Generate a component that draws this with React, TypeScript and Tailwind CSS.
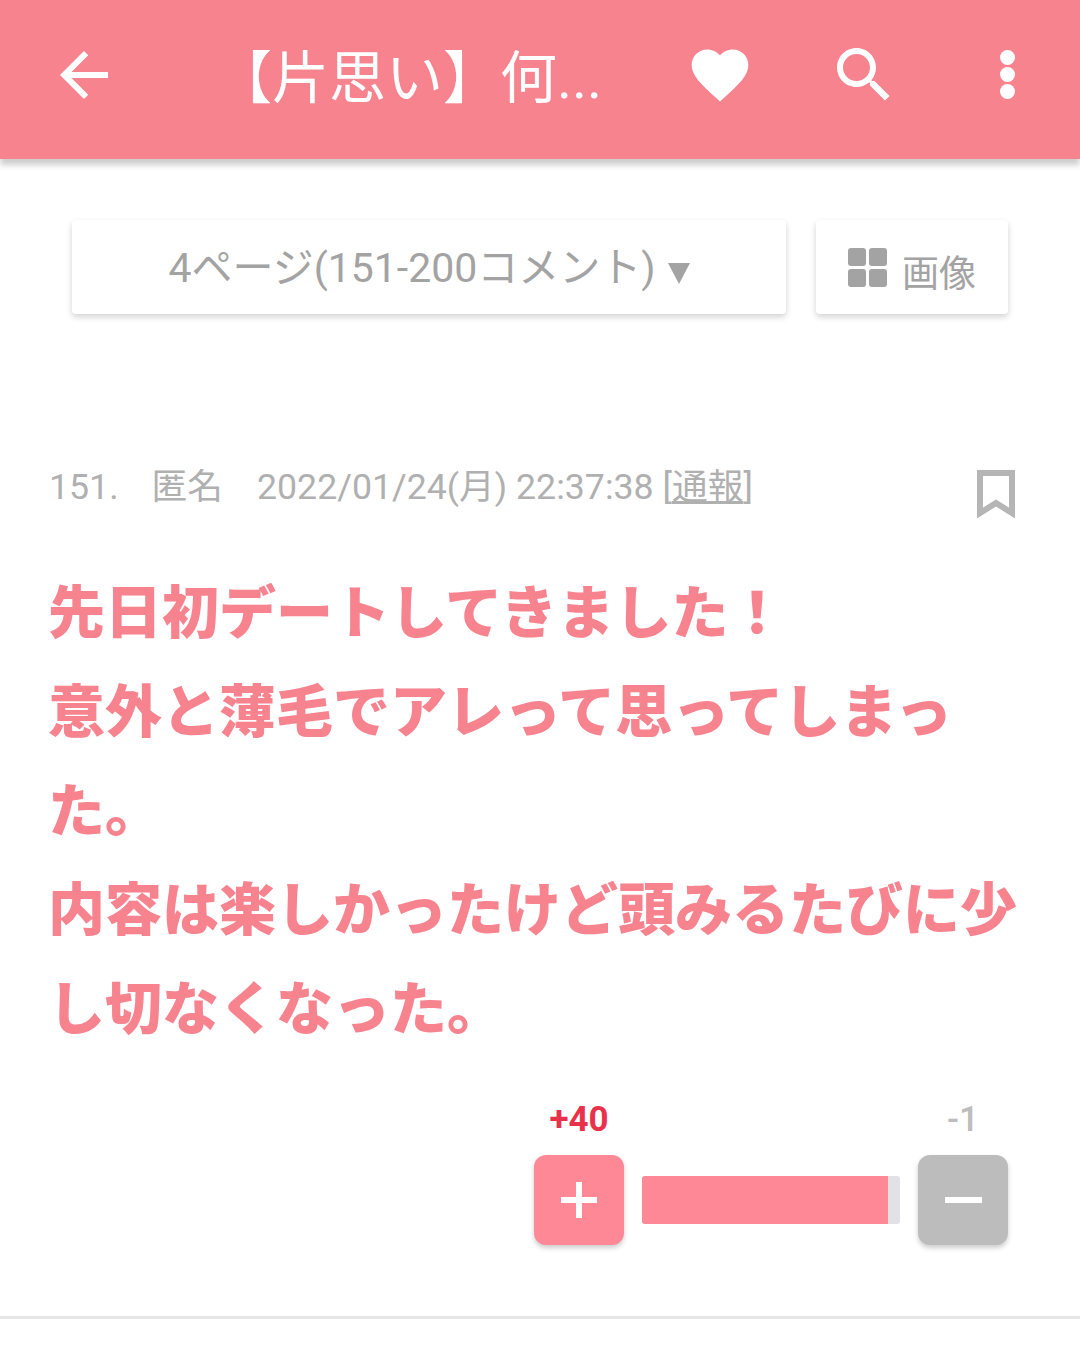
const font = "font-['Roboto','Noto_Sans_CJK_JP',sans-serif]"

function HeaderIcon({ d, className }: { d: string; className: string }) {
  return (
    <svg viewBox="0 0 24 24" className={className} fill="currentColor" aria-hidden="true">
      <path d={d} />
    </svg>
  )
}

function Header() {
  return (
    <header className="relative h-[159px] pb-[10px] bg-[#f7838f] text-white shadow-[0_6px_6px_rgba(0,0,0,0.2)] flex items-center">
      <HeaderIcon
        d="M20 11H7.83l5.59-5.59L12 4l-8 8 8 8 1.41-1.41L7.83 13H20v-2z"
        className="w-[72px] h-[72px] ml-[48px] shrink-0"
      />
      <div className="ml-[95px] mt-[7px] w-[396px] text-[57px] leading-none whitespace-nowrap">【片思い】何...</div>
      <HeaderIcon
        d="M12 21.35l-1.45-1.32C5.4 15.36 2 12.28 2 8.5 2 5.42 4.42 3 7.5 3c1.74 0 3.41.81 4.5 2.09C13.09 3.81 14.76 3 16.5 3 19.58 3 22 5.42 22 8.5c0 3.78-3.4 6.86-8.55 11.54L12 21.35z"
        className="w-[68px] h-[68px] ml-[75px] shrink-0"
      />
      <HeaderIcon
        d="M15.5 14h-.79l-.28-.27C15.41 12.59 16 11.11 16 9.5 16 5.91 13.09 3 9.5 3S3 5.91 3 9.5 5.91 16 9.5 16c1.61 0 3.09-.59 4.23-1.57l.27.28v.79l5 4.99L20.49 19l-4.99-5zm-6 0C7.01 14 5 11.99 5 9.5S7.01 5 9.5 5 14 7.01 14 9.5 11.99 14 9.5 14z"
        className="w-[72px] h-[72px] ml-[74px] shrink-0"
      />
      <div className="ml-[100px] flex flex-col gap-[2px]">
        <span className="w-[15px] h-[15px] rounded-full bg-white" />
        <span className="w-[15px] h-[15px] rounded-full bg-white" />
        <span className="w-[15px] h-[15px] rounded-full bg-white" />
      </div>
    </header>
  )
}

function Toolbar() {
  const card = 'h-[94px] bg-white rounded-[4px] shadow-[0_3px_6px_rgba(0,0,0,0.18)] flex items-center justify-center text-[#a3a3a3]'
  return (
    <div className="flex gap-[30px] pl-[72px] pt-[61px]">
      <div className={`${card} w-[714px] text-[41px] gap-[12px]`}>
        <span className="whitespace-nowrap mt-[4px]">4ページ(151-200コメント)</span>
        <span className="w-0 h-0 mt-[12px] border-x-[11px] border-x-transparent border-t-[21px] border-t-[#a3a3a3]" />
      </div>
      <div className={`${card} w-[192px] gap-[15px]`}>
        <div className="grid grid-cols-2 gap-[3px] w-[39px]">
          <span className="h-[18px] rounded-[3px] bg-[#a3a3a3]" />
          <span className="h-[18px] rounded-[3px] bg-[#a3a3a3]" />
          <span className="h-[18px] rounded-[3px] bg-[#a3a3a3]" />
          <span className="h-[18px] rounded-[3px] bg-[#a3a3a3]" />
        </div>
        <span className="text-[37px] leading-none mt-[14px] whitespace-nowrap">画像</span>
      </div>
    </div>
  )
}

function Comment() {
  return (
    <article className="pl-[48px] pt-[148px] border-b-[3px] border-[#e6e6e6] h-[1005px]">
      <div className="flex items-start justify-between pr-[65px]">
        <p className="pl-[1px] text-[35.7px] leading-[50px] text-[#b0b0b0] whitespace-pre">
          151.
          <span className="ml-[33px]">匿名</span>
          <span className="ml-[34px]">2022/01/24(月) 22:37:38 [</span>
          <span className="underline">通報</span>]
        </p>
        <svg viewBox="0 0 38 48" className="w-[38px] h-[48px] mt-[8px]" fill="none" aria-hidden="true">
          <path d="M3 3h32v40L19 33 3 43V3z" stroke="#b5b5b5" strokeWidth="6" />
        </svg>
      </div>
      <p className="mt-[46px] w-[985px] text-[57px] leading-[99px] font-black text-[#f7838f]">
        先日初デートしてきました！
        <br />
        意外と薄毛でアレって思ってしまった。
        <br />
        内容は楽しかったけど頭みるたびに少し切なくなった。
      </p>
      <div className="mt-[36px] ml-[486px] w-[474px]">
        <div className="flex justify-between h-[48px] items-center text-[35px] leading-none">
          <span className="w-[90px] text-center font-bold text-[#e8324c]">+40</span>
          <span className="w-[90px] text-center font-medium text-[#bdbdbd]">-1</span>
        </div>
        <div className="flex items-center gap-[18px] mt-[12px]">
          <button className="w-[90px] h-[90px] rounded-[12px] bg-[#ff8896] shadow-[0_3px_5px_rgba(0,0,0,0.2)] flex items-center justify-center shrink-0">
            <svg viewBox="0 0 36 36" className="w-[36px] h-[36px]" aria-hidden="true">
              <path d="M15 0h6v15h15v6H21v15h-6V21H0v-6h15z" fill="#fff" />
            </svg>
          </button>
          <div className="flex-1 h-[48px] rounded-[3px] bg-[#e2e2e6] overflow-hidden">
            <div className="h-full bg-[#ff8896]" style={{ width: `${(40 / 41) * 100 - 2.4}%` }} />
          </div>
          <button className="w-[90px] h-[90px] rounded-[12px] bg-[#bcbcbc] shadow-[0_3px_5px_rgba(0,0,0,0.2)] flex items-center justify-center shrink-0">
            <span className="w-[37px] h-[6px] bg-white" />
          </button>
        </div>
      </div>
    </article>
  )
}

export default function App() {
  return (
    <div className={`${font} w-[1080px] h-[1353px] bg-white overflow-hidden`}>
      <Header />
      <Toolbar />
      <Comment />
    </div>
  )
}
